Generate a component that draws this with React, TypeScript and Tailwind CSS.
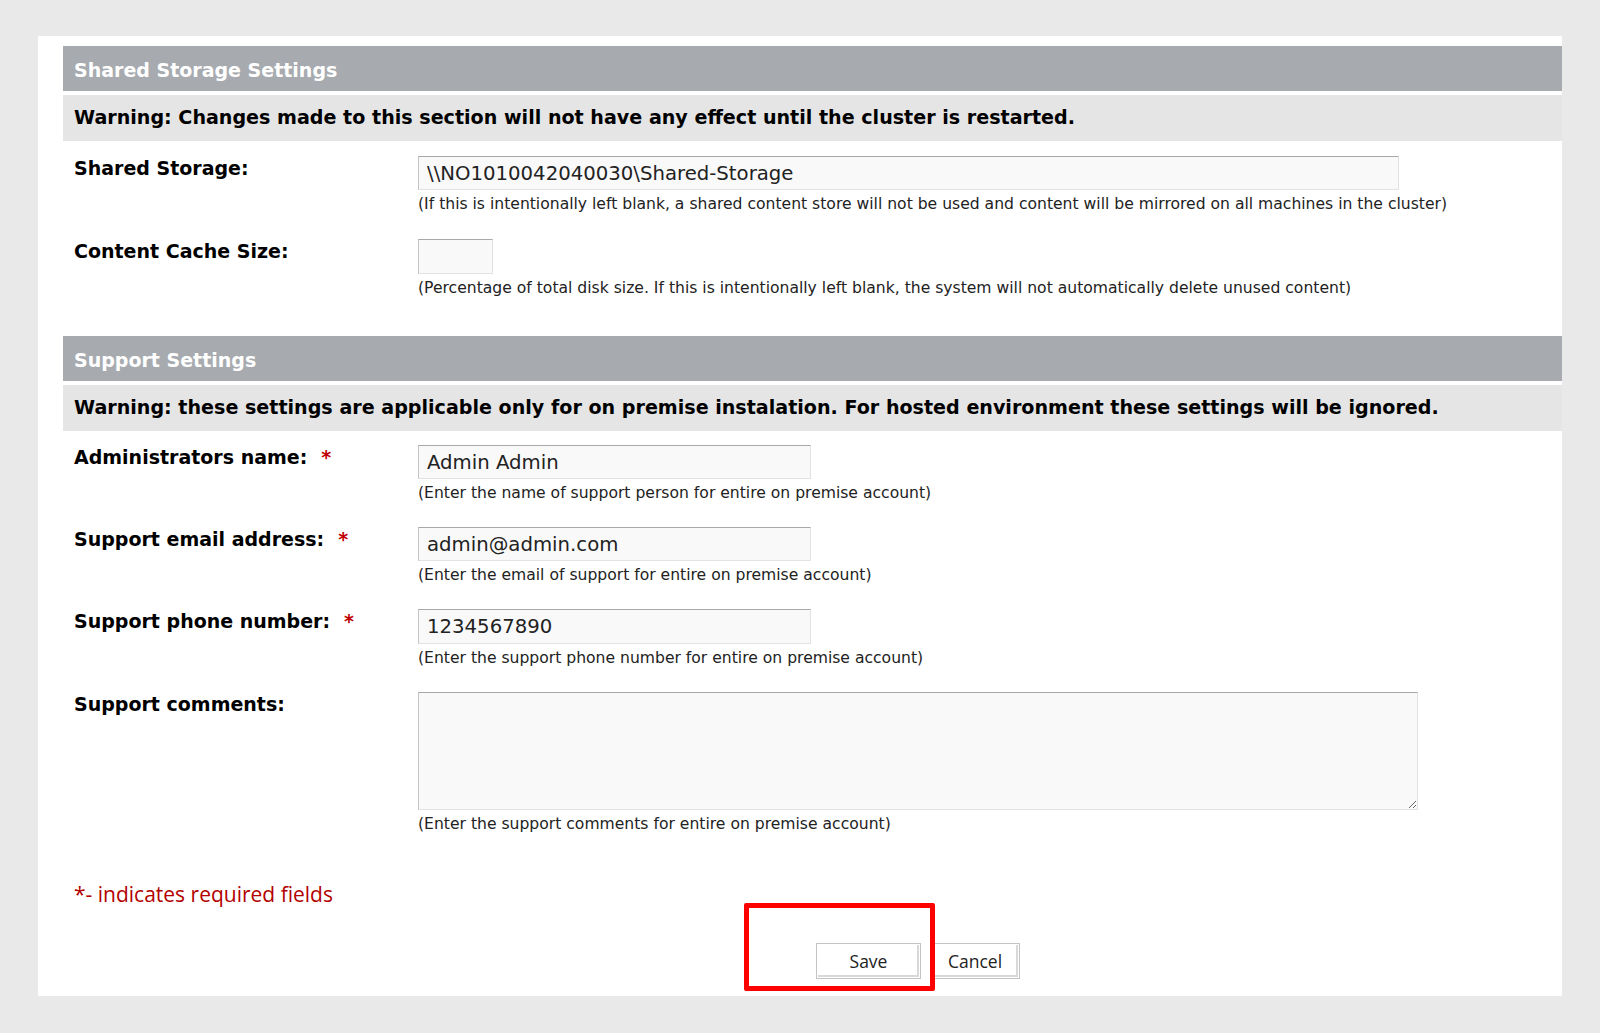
import React from 'react';

const font = { fontFamily: '"DejaVu Sans", Verdana, sans-serif' };

const inputCls =
  'h-[34px] bg-[#f9f9f9] border border-t-[#a8a8a8] border-l-[#c4c4c4] border-r-[#e2e2e2] border-b-[#e2e2e2] px-[8px] text-[19.7px] text-[#222] outline-none';

const Header = ({ title, warning }: { title: string; warning: string }) => (
  <div>
    <div className="h-[45px] bg-[#a7abaf] flex items-center pl-[11px] pt-[3px] text-[19px] font-bold text-white">
      {title}
    </div>
    <div className="mt-[4px] h-[46px] bg-[#e5e5e5] flex items-center pl-[11px] pt-[1px] text-[19.1px] font-bold text-black">
      {warning}
    </div>
  </div>
);

const Row = ({
  label,
  required,
  help,
  children,
  className = '',
}: {
  label: string;
  required?: boolean;
  help: string;
  children: React.ReactNode;
  className?: string;
}) => (
  <div className={`flex ${className}`}>
    <div className="w-[355px] shrink-0 pl-[11px] pt-[1px] text-[19px] font-bold leading-[22px] text-black">
      {label}
      {required && <span className="ml-[14px] text-[#c00000]">*</span>}
    </div>
    <div className="flex flex-col">
      {children}
      <div className="mt-[3px] h-[22px] text-[15.6px] leading-[22px] text-[#222] whitespace-nowrap">{help}</div>
    </div>
  </div>
);

export default function App() {
  return (
    <div className="min-h-[1033px] w-[1600px] bg-[#e9e9e9] pt-[36px] pl-[38px]" style={font}>
      <div className="relative w-[1524px] h-[960px] bg-white pt-[10px] pl-[25px]">
        <Header
          title="Shared Storage Settings"
          warning="Warning: Changes made to this section will not have any effect until the cluster is restarted."
        />
        <Row
          className="mt-[15px]"
          label="Shared Storage:"
          help="(If this is intentionally left blank, a shared content store will not be used and content will be mirrored on all machines in the cluster)"
        >
          <input className={`${inputCls} w-[981px]`} defaultValue="\\NO1010042040030\Shared-Storage" />
        </Row>
        <Row
          className="mt-[24px]"
          label="Content Cache Size:"
          help="(Percentage of total disk size. If this is intentionally left blank, the system will not automatically delete unused content)"
        >
          <input className={`${inputCls} w-[75px] h-[35px]`} defaultValue="" />
        </Row>

        <div className="mt-[37px]">
          <Header
            title="Support Settings"
            warning="Warning: these settings are applicable only for on premise instalation. For hosted environment these settings will be ignored."
          />
        </div>
        <Row
          className="mt-[14px]"
          label="Administrators name:"
          required
          help="(Enter the name of support person for entire on premise account)"
        >
          <input className={`${inputCls} w-[393px]`} defaultValue="Admin Admin" />
        </Row>
        <Row
          className="mt-[23px]"
          label="Support email address:"
          required
          help="(Enter the email of support for entire on premise account)"
        >
          <input className={`${inputCls} w-[393px]`} defaultValue="admin@admin.com" />
        </Row>
        <Row
          className="mt-[23px]"
          label="Support phone number:"
          required
          help="(Enter the support phone number for entire on premise account)"
        >
          <input className={`${inputCls} w-[393px] h-[35px]`} defaultValue="1234567890" />
        </Row>
        <Row
          className="mt-[23px]"
          label="Support comments:"
          help="(Enter the support comments for entire on premise account)"
        >
          <textarea
            className="block w-[1000px] h-[118px] bg-[#f9f9f9] border border-t-[#a8a8a8] border-l-[#c4c4c4] border-r-[#e2e2e2] border-b-[#e2e2e2] outline-none"
          />
        </Row>

        <div
          className="mt-[46px] pl-[11px] text-[21px] leading-[26px] text-[#b30000]"
          style={{ fontFamily: '"Open Sans", "DejaVu Sans", sans-serif' }}
        >
          *- indicates required fields
        </div>

        <div
          className="relative mt-[36px] flex gap-[9px] pl-[753px]"
          style={{ fontFamily: '"Open Sans", "DejaVu Sans", sans-serif' }}
        >
          <button className="w-[105px] h-[36px] bg-white border border-[#c4c4c4] shadow-[inset_0_0_0_1px_#fff,inset_-1px_-1px_0_2px_#d8d8d8] text-[17.5px] text-[#222]">
            Save
          </button>
          <button className="w-[90px] h-[36px] bg-white border border-[#c4c4c4] shadow-[inset_0_0_0_1px_#fff,inset_-1px_-1px_0_2px_#d8d8d8] text-[17.5px] text-[#222]">
            Cancel
          </button>
          <div className="absolute left-[681px] top-[-40px] w-[191px] h-[88px] border-[5px] border-[#ff0000] rounded-[2px] pointer-events-none" />
        </div>
      </div>
    </div>
  );
}
